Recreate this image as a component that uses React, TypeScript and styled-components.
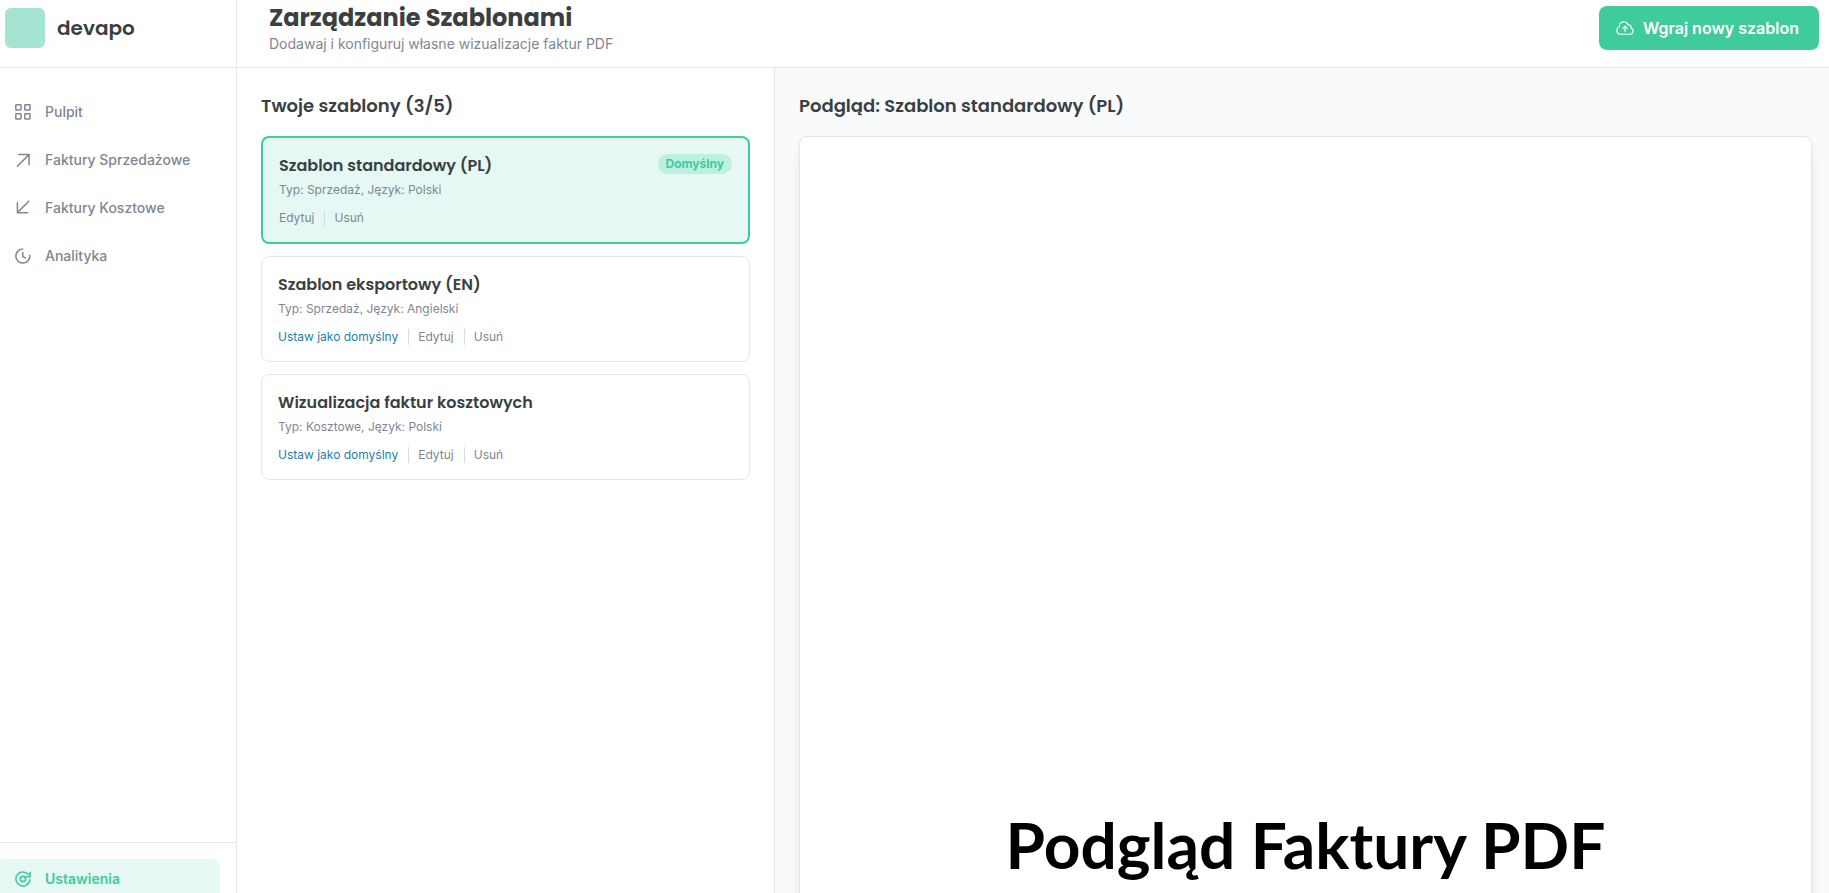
import React from "react";
import styled, { createGlobalStyle, css } from "styled-components";

const colors = {
  primary: "#3fcb9b",
  primarySoft: "#e5f8f3",
  primaryBadge: "#bef0e1",
  ink: "#3a3f42",
  muted: "#7f8694",
  line: "#e5e7eb",
  link: "#1f7fa8",
  canvas: "#f9fafc",
};

const GlobalStyle = createGlobalStyle`
  *, *::before, *::after { box-sizing: border-box; }
  body {
    margin: 0;
    background: #fff;
    color: ${colors.ink};
    font-family: Inter, "Liberation Sans", sans-serif;
    font-size: 14px;
    line-height: 20px;
  }
  h1, h2, h3, p, ul { margin: 0; padding: 0; }
  ul { list-style: none; }
  button { font: inherit; border: 0; cursor: pointer; }
`;

const displayFont = css`
  font-family: Poppins, Inter, sans-serif;
`;

const Shell = styled.div`
  display: flex;
  height: 100vh;
  overflow: hidden;
`;

const Sidebar = styled.aside`
  flex: 0 0 237px;
  display: flex;
  flex-direction: column;
  height: calc(100% + 22px);
  border-right: 1px solid ${colors.line};
`;

const Brand = styled.div`
  display: flex;
  align-items: center;
  gap: 12px;
  flex: 0 0 68px;
  padding: 0 5px 11px;
  border-bottom: 1px solid ${colors.line};
`;

const BrandMark = styled.span`
  width: 40px;
  height: 40px;
  border-radius: 6px;
  background: #a5e3d2;
`;

const BrandName = styled.span`
  ${displayFont}
  font-size: 20px;
  line-height: 28px;
  font-weight: 600;
`;

const Nav = styled.nav`
  flex: 1;
  padding-top: 24px;
`;

const NavList = styled.ul`
  display: flex;
  flex-direction: column;
  gap: 8px;
`;

const NavLink = styled.a<{ $active?: boolean }>`
  display: flex;
  align-items: center;
  gap: 14px;
  height: 40px;
  margin-right: 16px;
  padding-left: 15px;
  border-radius: 4px 8px 8px 4px;
  color: ${(p) => (p.$active ? colors.primary : colors.muted)};
  background: ${(p) => (p.$active ? colors.primarySoft : "transparent")};
  font-weight: ${(p) => (p.$active ? 600 : 500)};
  text-decoration: none;
`;

const SidebarFooter = styled.div`
  padding: 16px 0;
  border-top: 1px solid ${colors.line};
`;

const Main = styled.main`
  flex: 1;
  min-width: 0;
  display: flex;
  flex-direction: column;
`;

const Header = styled.header`
  display: flex;
  align-items: center;
  justify-content: space-between;
  flex: 0 0 68px;
  padding: 0 10px 11px 32px;
  border-bottom: 1px solid ${colors.line};
`;

const PageTitle = styled.h1`
  ${displayFont}
  font-size: 24px;
  line-height: 32px;
  font-weight: 700;
`;

const PageLead = styled.p`
  color: ${colors.muted};
`;

const UploadButton = styled.button`
  display: flex;
  align-items: center;
  gap: 8px;
  height: 44px;
  padding: 0 20px 0 16px;
  border-radius: 8px;
  background: ${colors.primary};
  color: #fff;
  font-size: 16px;
  font-weight: 600;
`;

const Body = styled.div`
  flex: 1;
  min-height: 0;
  display: flex;
`;

const TemplatePanel = styled.section`
  flex: 0 1 538px;
  padding: 24px;
  border-right: 1px solid ${colors.line};
`;

const PreviewPanel = styled.section`
  flex: 1;
  min-width: 0;
  padding: 24px 17px 24px 24px;
  background: ${colors.canvas};
`;

const SectionTitle = styled.h2`
  ${displayFont}
  margin-bottom: 16px;
  font-size: 18px;
  line-height: 28px;
  font-weight: 600;
`;

const TemplateList = styled.ul`
  display: flex;
  flex-direction: column;
  gap: 12px;
`;

const TemplateCard = styled.li<{ $selected?: boolean }>`
  padding: 16px;
  border: ${(p) => (p.$selected ? `2px solid ${colors.primary}` : `1px solid ${colors.line}`)};
  border-radius: 8px;
  background: ${(p) => (p.$selected ? colors.primarySoft : "#fff")};
`;

const CardHead = styled.div`
  display: flex;
  align-items: flex-start;
  justify-content: space-between;
`;

const CardTitle = styled.h3`
  ${displayFont}
  font-size: 16px;
  line-height: 24px;
  font-weight: 600;
`;

const Badge = styled.span`
  padding: 2px 8px;
  border-radius: 10px;
  background: ${colors.primaryBadge};
  color: ${colors.primary};
  font-size: 12px;
  line-height: 16px;
  font-weight: 700;
`;

const CardMeta = styled.p`
  margin-top: 4px;
  color: ${colors.muted};
  font-size: 12px;
  line-height: 16px;
`;

const CardActions = styled.div`
  display: flex;
  margin-top: 12px;
`;

const CardAction = styled.button<{ $accent?: boolean }>`
  padding: 0;
  background: none;
  color: ${(p) => (p.$accent ? colors.link : colors.muted)};
  font-size: 12px;
  line-height: 16px;

  & + & {
    margin-left: 10px;
    padding-left: 9px;
    border-left: 1px solid #d6d9e6;
  }
`;

const PreviewSheet = styled.div`
  display: flex;
  align-items: center;
  justify-content: center;
  aspect-ratio: 5 / 7;
  border: 1px solid ${colors.line};
  border-radius: 8px;
  background: #fff;
  box-shadow: 0 10px 15px -3px rgba(0, 0, 0, 0.1), 0 4px 6px -4px rgba(0, 0, 0, 0.1);
`;

const SheetLabel = styled.p`
  color: #000;
  font-family: Lato, sans-serif;
  font-size: 64px;
  line-height: 80px;
  font-weight: 700;
`;

const Icon = ({ size = 16, width = 1.5, children }: { size?: number; width?: number; children: React.ReactNode }) => (
  <svg
    width={size}
    height={size}
    viewBox={`0 0 ${size} ${size}`}
    fill="none"
    stroke="currentColor"
    strokeWidth={width}
    strokeLinecap="round"
    strokeLinejoin="round"
    aria-hidden="true"
  >
    {children}
  </svg>
);

const GridIcon = () => (
  <Icon>
    <rect x="0.8" y="0.8" width="5.2" height="5.2" rx="0.4" />
    <rect x="9.8" y="0.8" width="5.2" height="5.2" rx="0.4" />
    <rect x="0.8" y="9.8" width="5.2" height="5.2" rx="0.4" />
    <rect x="9.8" y="9.8" width="5.2" height="5.2" rx="0.4" />
  </Icon>
);

const ArrowOutIcon = () => (
  <Icon>
    <path d="M2.4 14.2 14 2.6M3.8 2.6h10.3v10.2" />
  </Icon>
);

const ArrowInIcon = () => (
  <Icon>
    <path d="M13.8 1.2 2.4 12.6M2.4 2.8v10h10" />
  </Icon>
);

const AnalyticsIcon = () => (
  <Icon>
    <path d="M7.6 1.1A7 7 0 1 0 14.8 7.4" />
    <path d="M7.8 4.6v4l2.6 1.3" />
  </Icon>
);

const SettingsIcon = () => (
  <Icon width={1.6}>
    <path d="M13.4 3.6A7 7 0 1 0 14.9 8.6" />
    <path d="M15.1 1.6v4.2h-4" />
    <circle cx="8" cy="8" r="2.6" />
  </Icon>
);

const CloudUploadIcon = () => (
  <svg width="20" height="20" viewBox="0 0 24 24" fill="none" stroke="currentColor" strokeWidth="1.4" strokeLinecap="round" strokeLinejoin="round" aria-hidden="true">
    <path d="M12 16V9.75m0 0 2.6 2.6m-2.6-2.6-2.6 2.6M6.75 19.5a4.5 4.5 0 0 1-1.41-8.775 5.25 5.25 0 0 1 10.233-2.33 3 3 0 0 1 3.758 3.848A3.752 3.752 0 0 1 18 19.5H6.75Z" />
  </svg>
);

const navItems = [
  { label: "Pulpit", icon: <GridIcon /> },
  { label: "Faktury Sprzedażowe", icon: <ArrowOutIcon /> },
  { label: "Faktury Kosztowe", icon: <ArrowInIcon /> },
  { label: "Analityka", icon: <AnalyticsIcon /> },
];

const templates = [
  { name: "Szablon standardowy (PL)", meta: "Typ: Sprzedaż, Język: Polski", isDefault: true },
  { name: "Szablon eksportowy (EN)", meta: "Typ: Sprzedaż, Język: Angielski", isDefault: false },
  { name: "Wizualizacja faktur kosztowych", meta: "Typ: Kosztowe, Język: Polski", isDefault: false },
];

export default function App() {
  return (
    <>
      <GlobalStyle />
      <Shell>
        <Sidebar>
          <Brand>
            <BrandMark />
            <BrandName>devapo</BrandName>
          </Brand>
          <Nav>
            <NavList>
              {navItems.map((item) => (
                <li key={item.label}>
                  <NavLink href="#">
                    {item.icon}
                    {item.label}
                  </NavLink>
                </li>
              ))}
            </NavList>
          </Nav>
          <SidebarFooter>
            <NavLink href="#" $active>
              <SettingsIcon />
              Ustawienia
            </NavLink>
          </SidebarFooter>
        </Sidebar>
        <Main>
          <Header>
            <div>
              <PageTitle>Zarządzanie Szablonami</PageTitle>
              <PageLead>Dodawaj i konfiguruj własne wizualizacje faktur PDF</PageLead>
            </div>
            <UploadButton type="button">
              <CloudUploadIcon />
              Wgraj nowy szablon
            </UploadButton>
          </Header>
          <Body>
            <TemplatePanel>
              <SectionTitle>Twoje szablony (3/5)</SectionTitle>
              <TemplateList>
                {templates.map((t) => (
                  <TemplateCard key={t.name} $selected={t.isDefault}>
                    <CardHead>
                      <CardTitle>{t.name}</CardTitle>
                      {t.isDefault && <Badge>Domyślny</Badge>}
                    </CardHead>
                    <CardMeta>{t.meta}</CardMeta>
                    <CardActions>
                      {!t.isDefault && (
                        <CardAction type="button" $accent>
                          Ustaw jako domyślny
                        </CardAction>
                      )}
                      <CardAction type="button">Edytuj</CardAction>
                      <CardAction type="button">Usuń</CardAction>
                    </CardActions>
                  </TemplateCard>
                ))}
              </TemplateList>
            </TemplatePanel>
            <PreviewPanel>
              <SectionTitle>Podgląd: Szablon standardowy (PL)</SectionTitle>
              <PreviewSheet>
                <SheetLabel>Podgląd Faktury PDF</SheetLabel>
              </PreviewSheet>
            </PreviewPanel>
          </Body>
        </Main>
      </Shell>
    </>
  );
}
